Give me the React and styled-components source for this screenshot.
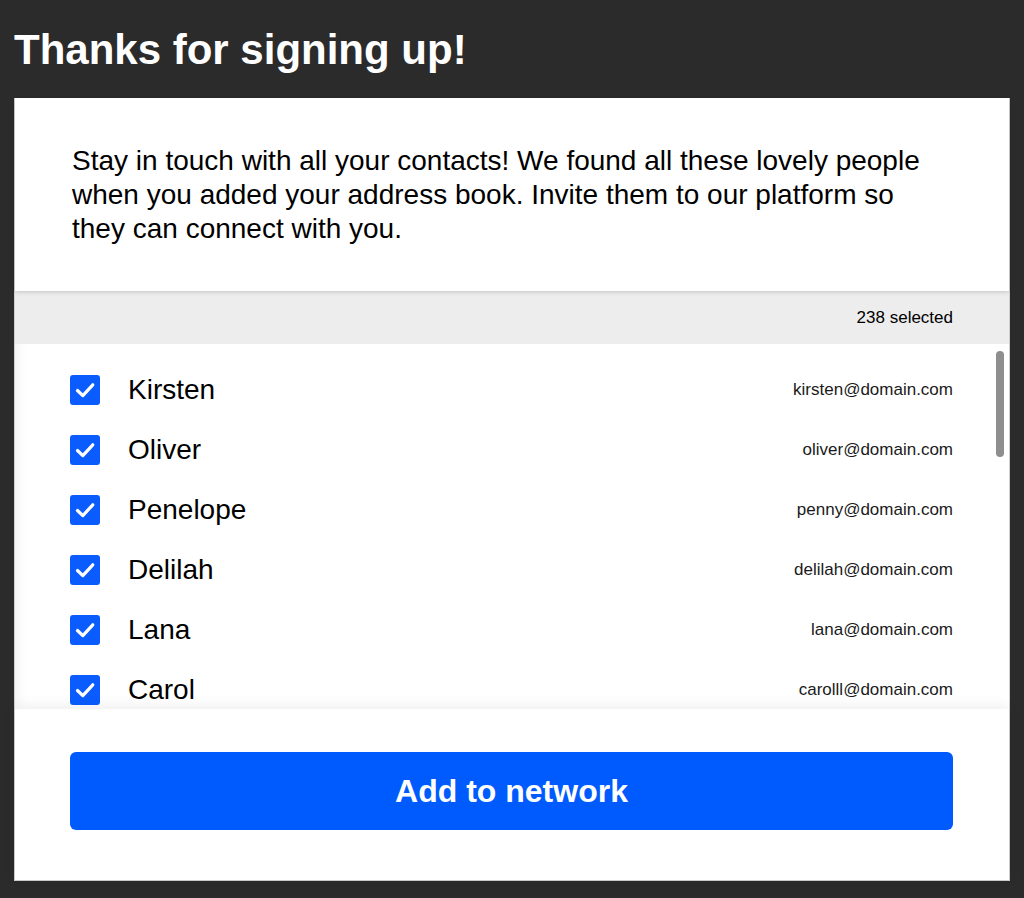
import React from 'react';
import styled, {createGlobalStyle} from 'styled-components';

const GlobalStyle = createGlobalStyle`
    html, body {
        margin: 0;
        padding: 0;
        background: #2b2b2b;
    }

    body {
        font-family: 'Liberation Sans', Arial, sans-serif;
        color: #000;
    }
`;

const Page = styled.div`
    width: 1024px;
    height: 898px;
    display: flex;
    flex-direction: column;
    padding: 0 14px 17px;
    box-sizing: border-box;
`;

const Header = styled.header`
    height: 98px;
    display: flex;
    align-items: center;
    flex-shrink: 0;
`;

const Title = styled.h1`
    margin: 2px 0 0;
    font-size: 42px;
    font-weight: 700;
    color: #fff;
`;

const Card = styled.section`
    flex: 1;
    display: flex;
    flex-direction: column;
    background: #fff;
    border: 1px solid #cfcfcf;
    border-top: none;
    min-height: 0;
`;

const Intro = styled.div`
    position: relative;
    z-index: 2;
    height: 193px;
    box-sizing: border-box;
    padding: 46px 79px 0 57px;
    background: #fff;
    box-shadow: 0 1px 4px rgba(0, 0, 0, 0.18);
    flex-shrink: 0;

    p {
        margin: 0;
        font-size: 28px;
        line-height: 34px;
    }
`;

const SelectedBar = styled.div`
    height: 53px;
    display: flex;
    align-items: center;
    justify-content: flex-end;
    padding: 0 56px;
    background: #ededed;
    font-size: 17px;
    flex-shrink: 0;
`;

const ListArea = styled.div`
    position: relative;
    flex: 1;
    min-height: 0;
    display: flex;
`;

const List = styled.ul`
    flex: 1;
    margin: 0;
    padding: 16px 56px 16px 55px;
    list-style: none;
    overflow-y: auto;
    scrollbar-width: none;
    box-shadow: inset 14px 0 14px -14px rgba(0, 0, 0, 0.08);
`;

const Thumb = styled.div`
    position: absolute;
    top: 7px;
    right: 5px;
    width: 8px;
    height: 106px;
    border-radius: 4px;
    background: #8e8e8e;
`;

const Row = styled.li`
    height: 60px;
    display: flex;
    align-items: center;
`;

const Box = styled.span`
    width: 30px;
    height: 30px;
    border-radius: 3px;
    background: ${props => props.checked ? '#0a5cff' : '#fff'};
    border: ${props => props.checked ? 'none' : '2px solid #999'};
    box-sizing: border-box;
    display: flex;
    align-items: center;
    justify-content: center;
    flex-shrink: 0;
`;

const Name = styled.span`
    margin-left: 28px;
    font-size: 28px;
    flex: 1;
`;

const Email = styled.span`
    font-size: 17px;
    color: #1a1a1a;
`;

const Footer = styled.div`
    position: relative;
    z-index: 2;
    height: 171px;
    box-sizing: border-box;
    padding: 43px 56px 0 55px;
    background: #fff;
    box-shadow: 0 -3px 12px rgba(0, 0, 0, 0.07);
    flex-shrink: 0;
`;

const AddButton = styled.button`
    width: 100%;
    height: 78px;
    border: none;
    border-radius: 6px;
    background: #005bff;
    color: #fff;
    font-family: 'Liberation Sans', Arial, sans-serif;
    font-size: 32px;
    font-weight: 700;
    cursor: pointer;
`;

const contacts = [
    {name: 'Kirsten', email: 'kirsten@domain.com'},
    {name: 'Oliver', email: 'oliver@domain.com'},
    {name: 'Penelope', email: 'penny@domain.com'},
    {name: 'Delilah', email: 'delilah@domain.com'},
    {name: 'Lana', email: 'lana@domain.com'},
    {name: 'Carol', email: 'carolll@domain.com'},
    {name: 'Marcus', email: 'marcus@domain.com'},
    {name: 'Theo', email: 'theo@domain.com'},
    {name: 'Iris', email: 'iris@domain.com'},
    {name: 'Jonah', email: 'jonah@domain.com'},
    {name: 'Ruby', email: 'ruby@domain.com'},
    {name: 'Felix', email: 'felix@domain.com'},
    {name: 'Nora', email: 'nora@domain.com'},
    {name: 'Hugo', email: 'hugo@domain.com'},
    {name: 'Stella', email: 'stella@domain.com'},
    {name: 'Milo', email: 'milo@domain.com'},
    {name: 'Ada', email: 'ada@domain.com'},
    {name: 'Quinn', email: 'quinn@domain.com'},
    {name: 'Vera', email: 'vera@domain.com'},
];

const Check = ({checked}) => (
    <Box checked={checked}>
        {checked && (
            <svg width="30" height="30" viewBox="0 0 30 30">
                <path
                    d="M7.5 15.5 L12.8 20.6 L22.8 9.8"
                    fill="none"
                    stroke="#fff"
                    strokeWidth="3.2"
                    strokeLinecap="round"
                    strokeLinejoin="round"
                />
            </svg>
        )}
    </Box>
);

const App = () => {
    return (
        <Page>
            <GlobalStyle />
            <Header>
                <Title>Thanks for signing up!</Title>
            </Header>
            <Card>
                <Intro>
                    <p>
                        Stay in touch with all your contacts! We found all these lovely people
                        when you added your address book. Invite them to our platform so
                        they can connect with you.
                    </p>
                </Intro>
                <SelectedBar>238 selected</SelectedBar>
                <ListArea>
                    <List>
                        {contacts.map(({name, email}) => (
                            <Row key={email}>
                                <Check checked />
                                <Name>{name}</Name>
                                <Email>{email}</Email>
                            </Row>
                        ))}
                    </List>
                    {/* scroll thumb, drawn over the list */}
                    <Thumb />
                </ListArea>
                <Footer>
                    <AddButton>Add to network</AddButton>
                </Footer>
            </Card>
        </Page>
    );
};

export default App;
